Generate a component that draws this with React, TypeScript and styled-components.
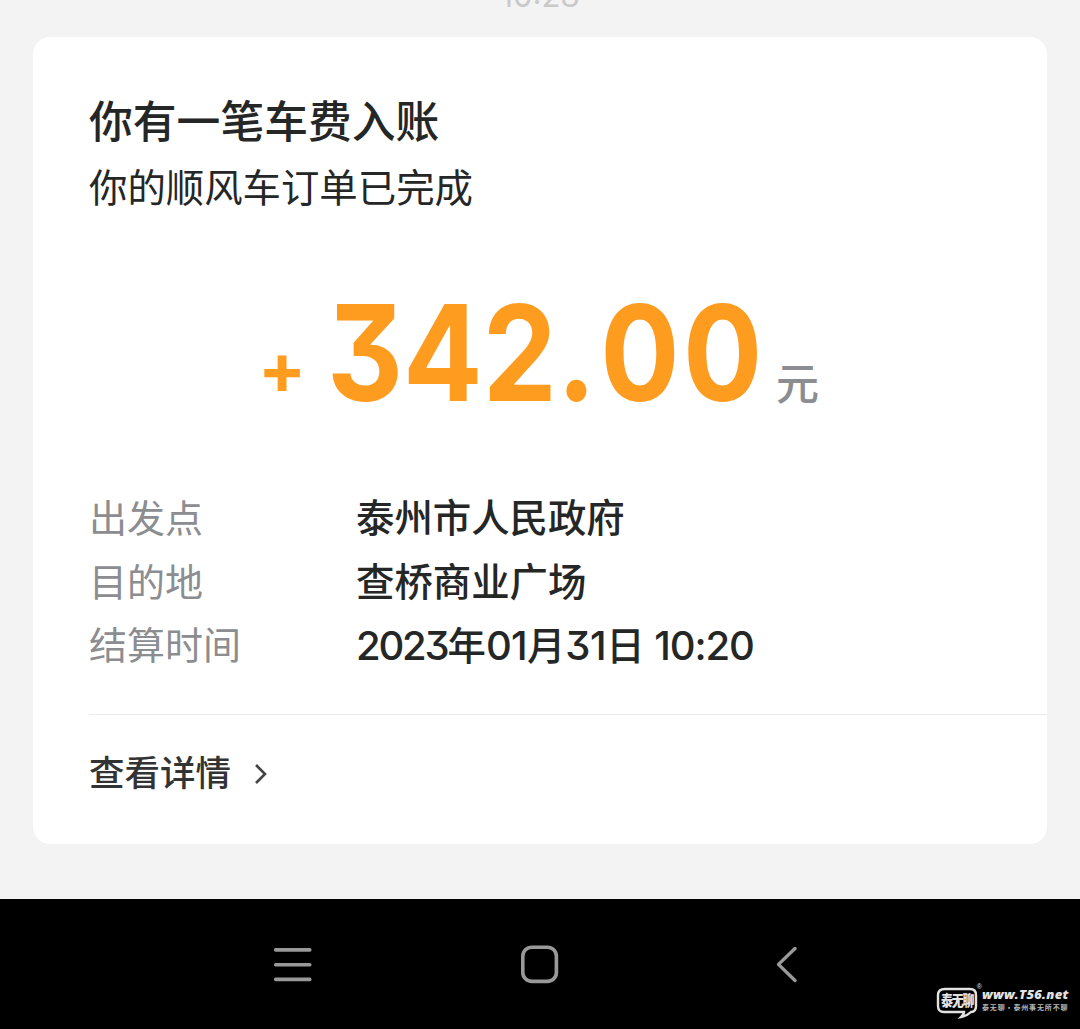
import React from "react";
import styled, { createGlobalStyle } from "styled-components";

const GlobalStyle = createGlobalStyle`
  body {
    margin: 0;
    background: #f3f3f3;
  }
`;

const Screen = styled.div`
  display: flex;
  flex-direction: column;
  box-sizing: border-box;
  height: 1029px;
  width: 1080px;
  overflow: hidden;
  background: #f3f3f3;
  color: #252626;
  font-family: Inter, "Noto Sans CJK SC", sans-serif;
  font-feature-settings: "cv09" 1;
`;

const Timestamp = styled.div`
  height: 37px;
  display: flex;
  justify-content: center;
  align-items: flex-start;
  color: #c9c9c9;
  font-size: 31px;
  line-height: 36px;

  span {
    margin-top: -22px;
  }
`;

const Card = styled.section`
  display: flex;
  flex-direction: column;
  box-sizing: border-box;
  height: 807px;
  margin: 0 33px;
  padding: 50px 0 0 56px;
  background: #fff;
  border-radius: 17px;
`;

const Line = styled.div<{ $size: number; $height: number; $weight?: number; $color?: string }>`
  font-family: "Noto Sans CJK SC", sans-serif;
  font-size: ${(p) => p.$size}px;
  line-height: ${(p) => p.$height}px;
  height: ${(p) => p.$height}px;
  font-weight: ${(p) => p.$weight ?? 400};
  color: ${(p) => p.$color ?? "#252626"};
  white-space: nowrap;
`;

const AmountRow = styled.div`
  display: flex;
  align-items: baseline;
  height: 160px;
  margin-top: 55px;
  padding-left: 169px;
  line-height: 160px;
  white-space: nowrap;
`;

const Plus = styled.span`
  width: 69px;
  color: #fe9c20;
  font-size: 71px;
  font-weight: 700;
  transform: translateY(-7px);
`;

const Amount = styled.span`
  width: 449px;
  color: #fe9c20;
  font-size: 133px;
  font-weight: 700;
  transform: scaleX(0.885);
  transform-origin: left;
`;

const Spaced = styled.span<{ $spacing: number }>`
  letter-spacing: ${(p) => p.$spacing}px;
`;

const Unit = styled.span`
  color: #8b8d90;
  font-family: "Noto Sans CJK SC", sans-serif;
  font-size: 43px;
  font-weight: 500;
  transform: translateY(-1px);
`;

const Details = styled.dl`
  display: grid;
  grid-template-columns: 267px 1fr;
  grid-auto-rows: 63.5px;
  margin: 54px 0 0;
  font-size: 38.4px;
  line-height: 63px;
`;

const Label = styled.dt`
  margin-top: -3px;
  color: #8b8d90;
  font-family: "Noto Sans CJK SC", sans-serif;
  font-size: 38px;
`;

const Value = styled.dd`
  margin: 0;
  font-weight: 500;
  white-space: nowrap;
`;

const Digits = styled(Spaced)`
  font-size: 40px;
`;

const Footer = styled.div`
  display: flex;
  align-items: center;
  gap: 23px;
  height: 116px;
  margin-top: auto;
  margin-bottom: 13px;
  border-top: 1px solid #ebebeb;

  svg {
    margin-top: 1px;
  }
`;

const FooterLink = styled(Line)`
  margin-top: -5px;
`;

const NavBar = styled.nav`
  display: flex;
  align-items: flex-start;
  box-sizing: border-box;
  height: 130px;
  margin-top: auto;
  padding: 45px 8px 0 272px;
  background: #000;

  svg {
    flex: none;
  }
`;

const HomeSlot = styled.div`
  display: flex;
  margin-left: 207px;
`;

const BackSlot = styled.div`
  display: flex;
  margin-left: 215px;
`;

const Watermark = styled.div`
  display: flex;
  margin: 37px 0 0 136px;
  color: #e2e2e2;
`;

const Brand = styled.div`
  position: relative;
  flex: none;
  width: 46px;
  height: 38px;
`;

const BrandText = styled.span`
  position: absolute;
  left: 5px;
  top: 10px;
  font: 900 12px/17px "Noto Sans CJK SC", sans-serif;
  letter-spacing: -1.2px;
  white-space: nowrap;
  transform: scaleY(1.2);
`;

const Registered = styled.span`
  position: absolute;
  right: 0;
  top: 2px;
  font: 7px/8px "Liberation Sans", sans-serif;
`;

const Site = styled.div`
  display: flex;
  flex-direction: column;
  padding-top: 5px;
`;

const Url = styled.span`
  font: italic 800 13px/16px "Open Sans", sans-serif;
  letter-spacing: 0.25px;
  white-space: nowrap;
`;

const Slogan = styled.span`
  color: #b5b5b5;
  font: 700 7px/10px "Noto Sans CJK SC", sans-serif;
  letter-spacing: 0.85px;
  white-space: nowrap;
`;

const trip = [
  { label: "出发点", value: "泰州市人民政府" },
  { label: "目的地", value: "查桥商业广场" },
  {
    label: "结算时间",
    value: (
      <>
        <Digits $spacing={-2.2}>2023</Digits>年<Digits $spacing={-0.7}>01</Digits>月
        <Digits $spacing={-0.4}>31</Digits>日<Digits $spacing={-1.1}> 10:20</Digits>
      </>
    ),
  },
];

export default function App() {
  return (
    <Screen>
      <GlobalStyle />
      <Timestamp>
        <span>10:28</span>
      </Timestamp>
      <Card>
        <Line $size={43.8} $height={65} $weight={500}>你有一笔车费入账</Line>
        <Line $size={38.4} $height={66}>你的顺风车订单已完成</Line>
        <AmountRow>
          <Plus>+</Plus>
          <Amount>
            <Spaced $spacing={0}>342</Spaced>
            <Spaced $spacing={4.5}>.</Spaced>
            <Spaced $spacing={4}>00</Spaced>
          </Amount>
          <Unit>元</Unit>
        </AmountRow>
        <Details>
          {trip.map((t) => (
            <React.Fragment key={t.label}>
              <Label>{t.label}</Label>
              <Value>{t.value}</Value>
            </React.Fragment>
          ))}
        </Details>
        <Footer>
          <FooterLink $size={35.5} $height={54} $weight={500} $color="#333">查看详情</FooterLink>
          <svg width="14" height="22" viewBox="0 0 14 22" fill="none" stroke="#444" strokeWidth="2.6">
            <path d="M2 2 L11 11 L2 20" />
          </svg>
        </Footer>
      </Card>
      <NavBar>
        <svg width="42" height="42" viewBox="0 0 42 42" stroke="#999" strokeWidth="3.6" strokeLinecap="round">
          <path d="M3.7 5.9H37.8M3.7 20.7H37.8M3.7 35.4H37.8" />
        </svg>
        <HomeSlot>
          <svg width="38" height="42" viewBox="0 0 38 42" fill="none" stroke="#999" strokeWidth="3.6">
            <rect x="1.8" y="3.2" width="33.6" height="34.2" rx="9" />
          </svg>
        </HomeSlot>
        <BackSlot>
          <svg width="26" height="42" viewBox="0 0 26 42" fill="none" stroke="#999" strokeWidth="3.4" strokeLinecap="round" strokeLinejoin="round">
            <path d="M21 4.5L4.5 20.4L21 36.5" />
          </svg>
        </BackSlot>
        <Watermark>
          <Brand>
            <svg width="46" height="38" viewBox="0 0 46 38" fill="none" stroke="#e2e2e2" strokeWidth="2.4">
              <path d="M9 8H34Q40 8 40 14V25Q40 31 35 31Q31 35 25 36Q28 33 28 31H8Q2 31 2 25V14Q2 8 9 8Z" />
            </svg>
            <BrandText>泰无聊</BrandText>
            <Registered>®</Registered>
          </Brand>
          <Site>
            <Url>www.T56.net</Url>
            <Slogan>泰无聊·泰州事无所不聊</Slogan>
          </Site>
        </Watermark>
      </NavBar>
    </Screen>
  );
}
